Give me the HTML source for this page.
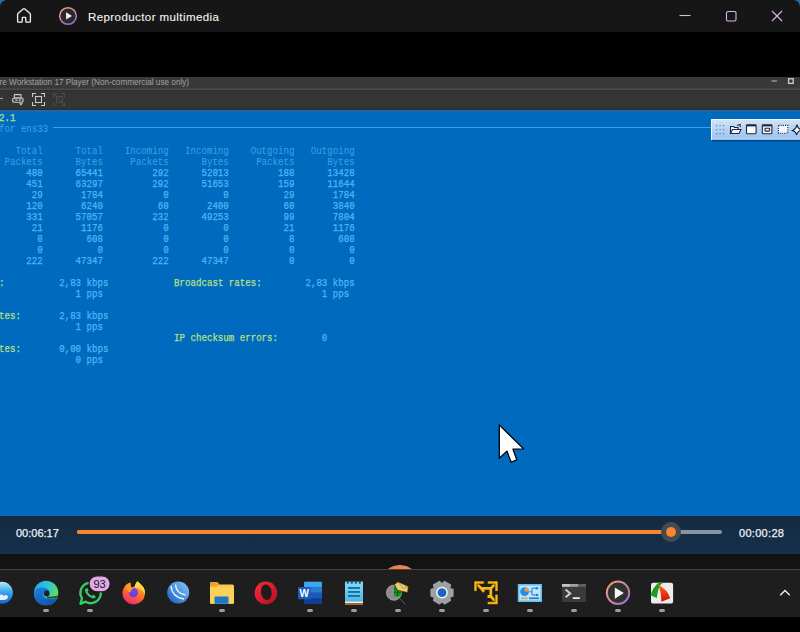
<!DOCTYPE html>
<html><head><meta charset="utf-8"><style>
*{margin:0;padding:0;box-sizing:border-box}
html,body{width:800px;height:632px;overflow:hidden;background:#000;font-family:"Liberation Sans",sans-serif}
.abs{position:absolute}
svg{position:absolute;overflow:visible}
#title{left:0;top:0;width:800px;height:32px;background:#161616}
#title .t{left:88px;top:10px;font-size:11.5px;line-height:14px;letter-spacing:0.42px;color:#f2f2f2;white-space:nowrap;-webkit-text-stroke:0.12px #f2f2f2}
#vmt{left:0;top:77px;width:800px;height:11px;background:#393939}
#vmt .t{left:-0.5px;top:0px;font-size:8.2px;color:#a2a2a2;white-space:nowrap;line-height:11px}
#sep{left:0;top:88px;width:800px;height:2px;background:linear-gradient(#414141 0 1px,#4c4c4c 1px)}
#sep2{left:0;top:90px;width:800px;height:1px;background:#2f2f2f}
#tb{left:0;top:91px;width:800px;height:19px;background:linear-gradient(#343434 0,#343434 17px,#3a3530 17px,#2b3033 18px)}
#con{left:0;top:110px;width:800px;height:406px;background:linear-gradient(#2d6699 0,#2d6699 1px,#1268b5 1px,#1268b5 2px,#006abf 2px);overflow:hidden}
#txt{left:-1.17px;top:2.7px;width:1000px;transform-origin:0 0;transform:scaleX(0.8683)}
.ln{position:absolute;left:0;white-space:pre;font-family:"Liberation Mono",monospace;font-size:10.5px;line-height:11px;-webkit-text-stroke:0.25px currentColor}
.y{color:#b9e07c}
.h{color:#3d9fe6;-webkit-text-stroke:0.05px currentColor}
.v{color:#4cb8f8}
#hline{left:53px;top:17px;width:747px;height:1px;background:#3a9fe8}
#ctl{left:0;top:516px;width:800px;height:38px;background:linear-gradient(#142a42,#16314c)}
#ctl .t{font-size:11px;line-height:14px;letter-spacing:0.15px;color:#eef2f6;white-space:nowrap;-webkit-text-stroke:0.25px #eef2f6}
#gap{left:0;top:554px;width:800px;height:15px;background:#131313}
#task{left:0;top:569px;width:800px;height:48px;background:#1e1e1e;border-top:1px solid #434343}
.dot{position:absolute;top:609px;width:6px;height:3px;border-radius:2px;background:#9c9c9c}
</style></head><body>
<div id="title" class="abs">
  <svg style="left:0;top:0" width="800" height="32">
    <path d="M0,8 A8,8 0 0 1 6,0 L0,0 Z" fill="#1f6f9a"/>
    <path d="M800,8 A8,8 0 0 0 794,0 L800,0 Z" fill="#1f6f9a"/>
    <path d="M17.6,14.6 Q17.6,13.8 18.2,13.3 L23.2,9 Q24,8.4 24.8,9 L29.8,13.3 Q30.4,13.8 30.4,14.6 V21.4 Q30.4,22.2 29.6,22.2 H26.4 Q25.8,22.2 25.8,21.6 V18.2 Q25.8,17.4 25,17.4 H23 Q22.2,17.4 22.2,18.2 V21.6 Q22.2,22.2 21.6,22.2 H18.4 Q17.6,22.2 17.6,21.4 Z" fill="none" stroke="#f4f4f4" stroke-width="1.3" stroke-linejoin="round"/>
    <defs><linearGradient id="mg" x1="0.2" y1="0" x2="0.6" y2="1"><stop offset="0" stop-color="#eaa078"/><stop offset="0.5" stop-color="#c884a8"/><stop offset="1" stop-color="#9070d0"/></linearGradient></defs>
    <circle cx="68" cy="16" r="8.3" fill="#29292b" stroke="url(#mg)" stroke-width="1.6"/>
    <path d="M66.1,12.3 L72,15.9 L66.1,19.6 Z" fill="#f4f4f4"/>
    <path d="M679.5,15.5 H690.5" stroke="#dcb8e6" stroke-width="1.1"/>
    <rect x="726.5" y="11.5" width="9.5" height="9.5" rx="1.5" fill="none" stroke="#dcb8e6" stroke-width="1.1"/>
    <path d="M772,11 L782,21 M782,11 L772,21" stroke="#dcb8e6" stroke-width="1.1"/>
  </svg>
  <div class="abs t">Reproductor multimedia</div>
</div>

<div id="vmt" class="abs"><div class="abs t">re Workstation 17 Player (Non-commercial use only)</div>
  <svg style="left:0;top:-1px" width="800" height="12">
    <path d="M771.5,5 H777" stroke="#bdbdbd" stroke-width="1"/>
    <rect x="788.6" y="2.8" width="4.6" height="4.6" fill="none" stroke="#d0d0d0" stroke-width="1.3"/>
  </svg>
</div>
<div id="sep" class="abs"></div><div id="sep2" class="abs"></div>
<div id="tb" class="abs">
  <svg style="left:0;top:-91px" width="800" height="120">
    <path d="M0,98.5 L3,98.5" stroke="#9a9a9a" stroke-width="1.2"/>
    <g fill="none" stroke="#c9c9c9" stroke-width="1.1">
      <rect x="14.3" y="94.6" width="6.8" height="3.4" rx="0.6"/>
      <rect x="12.6" y="98" width="10.6" height="4.3" rx="2.1"/>
    </g>
    <path d="M15.2,100.2 H17.6 M18.8,100.2 H21.2" stroke="#c9c9c9" stroke-width="1.3"/>
    <path d="M18.9,103.2 L23.1,103.2 L21,105.6 Z" fill="#c9c9c9"/>
    <g fill="none" stroke="#c9c9c9" stroke-width="1.1">
      <path d="M32.5,97 V93.5 H36 M41,93.5 H44.5 V97 M44.5,102 V105.5 H41 M36,105.5 H32.5 V102"/>
      <rect x="35.5" y="96.5" width="6" height="6"/>
    </g>
    <g fill="none" stroke="#4c4c4c" stroke-width="1.1">
      <path d="M53.5,97 V93.5 H57 M61,93.5 H64.5 V97 M64.5,102 V105.5 H61 M57,105.5 H53.5 V102"/>
      <rect x="56.5" y="96.5" width="6" height="6"/>
      <path d="M54,94 L64,105"/>
    </g>
  </svg>
</div>

<div id="con" class="abs">
  <div id="hline" class="abs"></div>
  <div id="txt" class="abs">
<div class="ln" style="top:0px"><span class="y">2.1</span></div>
<div class="ln" style="top:11px"><span class="h">for ens33</span></div>
<div class="ln" style="top:33px"><span class="h">   Total      Total    Incoming   Incoming    Outgoing   Outgoing</span></div>
<div class="ln" style="top:44px"><span class="h"> Packets      Bytes     Packets      Bytes     Packets      Bytes</span></div>
<div class="ln" style="top:55px"><span class="v">     480      65441         292      52013         188      13428</span></div>
<div class="ln" style="top:66px"><span class="v">     451      63297         292      51653         159      11644</span></div>
<div class="ln" style="top:77px"><span class="v">      29       1784           0          0          29       1784</span></div>
<div class="ln" style="top:88px"><span class="v">     120       6240          60       2400          60       3840</span></div>
<div class="ln" style="top:99px"><span class="v">     331      57057         232      49253          99       7804</span></div>
<div class="ln" style="top:110px"><span class="v">      21       1176           0          0          21       1176</span></div>
<div class="ln" style="top:121px"><span class="v">       8        608           0          0           8        608</span></div>
<div class="ln" style="top:132px"><span class="v">       0          0           0          0           0          0</span></div>
<div class="ln" style="top:143px"><span class="v">     222      47347         222      47347           0          0</span></div>
<div class="ln" style="top:165px"><span class="y">:</span>          <span class="v">2,83 kbps</span>            <span class="y">Broadcast rates:</span>        <span class="v">2,83 kbps</span></div>
<div class="ln" style="top:176px">              <span class="v">1 pps</span>                                        <span class="v">1 pps</span></div>
<div class="ln" style="top:198px"><span class="y">tes:</span>       <span class="v">2,83 kbps</span></div>
<div class="ln" style="top:209px">              <span class="v">1 pps</span></div>
<div class="ln" style="top:220px">                                <span class="y">IP checksum errors:</span>        <span class="v">0</span></div>
<div class="ln" style="top:231px"><span class="y">tes:</span>       <span class="v">0,00 kbps</span></div>
<div class="ln" style="top:242px">              <span class="v">0 pps</span></div>
  </div>
  <svg style="left:0;top:-110px" width="800" height="632">
    <defs><linearGradient id="ftg" x1="0" y1="0" x2="0" y2="1"><stop offset="0" stop-color="#d3e5f8"/><stop offset="1" stop-color="#98c0ee"/></linearGradient></defs>
    <rect x="712" y="140" width="88" height="1.6" fill="#083e78" opacity="0.8"/>
    <rect x="711" y="119" width="89" height="21" fill="url(#ftg)"/>
    <path d="M711.5,140 V119.5 H800" fill="none" stroke="#f2f8fe" stroke-width="1"/>
    <rect x="712" y="137.5" width="88" height="1" fill="#b8d6f6"/>
    <g fill="#5f7fa8">
      <rect x="716" y="125" width="1.2" height="1.2"/><rect x="719.5" y="125" width="1.2" height="1.2"/><rect x="723" y="125" width="1.2" height="1.2"/>
      <rect x="716" y="129" width="1.2" height="1.2"/><rect x="719.5" y="129" width="1.2" height="1.2"/><rect x="723" y="129" width="1.2" height="1.2"/>
      <rect x="716" y="133" width="1.2" height="1.2"/><rect x="719.5" y="133" width="1.2" height="1.2"/><rect x="723" y="133" width="1.2" height="1.2"/>
    </g>
    <g fill="none" stroke="#1b2a40" stroke-width="1.1">
      <path d="M730.5,133.5 V126.5 H733.5 L734.5,127.5 H738 V129.5 M730.5,133.5 L732.5,129.5 H741 L739,133.5 Z" fill="#f8f8f8"/>
      <path d="M737,125.5 L740,124.5 L740.5,127" />
      <rect x="746.5" y="124.8" width="9.6" height="9" rx="0.8" fill="#fafafa"/>
      <path d="M746.5,125.6 H756.1" stroke-width="1.6"/>
      <rect x="762.3" y="124.8" width="9.6" height="9" rx="0.8" fill="#f2f2f2"/>
      <path d="M762.3,125.6 H771.9" stroke-width="1.6"/>
      <rect x="765" y="128.3" width="4.6" height="2.8" rx="0.6"/>
      <rect x="778.4" y="125.4" width="9.4" height="7.8" stroke-dasharray="1.1 1.1" fill="#f6f8fa"/>
      <path d="M797,124.6 Q797.6,128.8 801.5,129.6 Q797.8,130.8 796.4,134.8 Q795.8,131.2 792.6,130.6 Q796,129 797,124.6 Z" fill="#f8f8f8"/>
    </g>
    <path d="M499.3,424.9 L499.3,458.3 L506.9,451.1 L511.1,462.1 L516.8,459.9 L513,449.2 L523.6,448.9 Z" fill="#fff" stroke="#000" stroke-width="1.3" stroke-linejoin="round"/>
  </svg>
</div>

<div id="ctl" class="abs">
  <div class="abs t" style="left:16px;top:10px;letter-spacing:0">00:06:17</div>
  <div class="abs t" style="left:739px;top:10px;letter-spacing:0.3px">00:00:28</div>
  <div class="abs" style="left:77px;top:14px;width:645px;height:4px;border-radius:2px;background:#8b949c"></div>
  <div class="abs" style="left:77px;top:14px;width:594px;height:4px;border-radius:2px;background:#f7862f"></div>
  <div class="abs" style="left:661px;top:6px;width:20px;height:20px;border-radius:50%;background:#454a50"></div>
  <div class="abs" style="left:666px;top:11px;width:10px;height:10px;border-radius:50%;background:#f7862f"></div>
</div>
<div id="gap" class="abs"></div>
<div id="task" class="abs"></div>
<svg style="left:0;top:0" width="800" height="632">
  <defs>
    <clipPath id="abv"><rect x="0" y="554" width="800" height="15"/></clipPath>
    <linearGradient id="orng" x1="0" y1="0" x2="1" y2="0"><stop offset="0" stop-color="#e9772e"/><stop offset="0.7" stop-color="#ef8a52"/><stop offset="1" stop-color="#d9728a"/></linearGradient>
    <linearGradient id="msg" x1="0" y1="0" x2="0" y2="1"><stop offset="0" stop-color="#b5ecfb"/><stop offset="0.45" stop-color="#3aa8ee"/><stop offset="1" stop-color="#1464d8"/></linearGradient>
    <linearGradient id="edg" x1="0" y1="0.2" x2="1" y2="0.6"><stop offset="0" stop-color="#2aa8e8"/><stop offset="0.5" stop-color="#2fc6d6"/><stop offset="1" stop-color="#66e04e"/></linearGradient><linearGradient id="edw" x1="0" y1="0" x2="0.6" y2="1"><stop offset="0" stop-color="#1c86e0"/><stop offset="1" stop-color="#0f56b0"/></linearGradient>
    <linearGradient id="ffx" x1="0.8" y1="0" x2="0.3" y2="1"><stop offset="0" stop-color="#ffc83a"/><stop offset="0.45" stop-color="#ff7a22"/><stop offset="1" stop-color="#f0266a"/></linearGradient>
    <linearGradient id="wbx" x1="1" y1="0" x2="0" y2="1"><stop offset="0" stop-color="#8fc8f6"/><stop offset="0.5" stop-color="#4a92e0"/><stop offset="1" stop-color="#1c5cb8"/></linearGradient>
    <linearGradient id="opr" x1="0" y1="0" x2="1" y2="1"><stop offset="0" stop-color="#ff2a3a"/><stop offset="1" stop-color="#b0101e"/></linearGradient>
    <linearGradient id="mpr" x1="0" y1="0" x2="1" y2="1"><stop offset="0" stop-color="#f4a468"/><stop offset="1" stop-color="#9a6ad8"/></linearGradient>
  </defs>
  <circle cx="399.85" cy="584.6" r="19.7" fill="url(#orng)" clip-path="url(#abv)"/>
  <!-- 1 partial blue -->
  <circle cx="1.9" cy="592.8" r="11" fill="url(#msg)"/>
  <path d="M-2,596 Q2,593 4,596 Q6,594 8,596.5 Q8,600 3,600 L-2,600 Z" fill="#e8eef4"/>
  <!-- Edge -->
  <circle cx="46.1" cy="593" r="12.2" fill="url(#edg)"/>
  <path d="M33.9,592.5 Q34.5,587.6 41,587.4 Q48,587.3 50,592.3 Q46,589.5 43.6,592.6 Q42.2,597.2 46.5,598.6 Q52.5,599.6 57.8,597.2 Q55.5,605.2 46,605.2 Q34.2,605 33.9,592.5 Z" fill="url(#edw)"/>
  <circle cx="46.7" cy="593.5" r="2.9" fill="#1b2226"/>
  <path d="M47,596.4 Q52.5,597.2 58.2,595.6 L58,597.1 Q52.5,599.1 46.8,598.2 Z" fill="#14303a" opacity="0.85"/>
  <!-- WhatsApp -->
  <path d="M80.5,603.8 L82,598.3 A10.2,10.2 0 1 1 85.5,601.7 Z" fill="none" stroke="#35cc68" stroke-width="2.4" stroke-linejoin="round"/>
  <path d="M85.5,588.5 Q84.5,590 85.5,592.5 Q87.5,596.5 91.5,598 Q94,599 95.5,597.5 L95.5,596 L93.2,594.8 L92,596 Q89,594.8 87.5,591.8 L88.6,590.6 L87.6,588.2 Z" fill="#35cc68"/>
  <rect x="89" y="575.8" width="21.2" height="16" rx="8" fill="#e0aaea" stroke="#1d1d1d" stroke-width="1.2"/>
  <text x="99.5" y="588.3" font-family="Liberation Sans" font-size="11" fill="#151515" text-anchor="middle">93</text>
  <!-- Firefox -->
  <circle cx="133.7" cy="593.2" r="11.2" fill="url(#ffx)"/>
  <path d="M130.2,580.5 L136.8,580.5 L134.6,586.8 L131.2,587.2 Z" fill="#1d1d1d"/>
  <path d="M134.2,587.2 Q135.6,583.6 137.3,580.9 Q140.5,583.2 142.6,586.2 Q145.4,589.5 145,594.5 Q143,588.3 134.2,587.2 Z" fill="#ffd845"/>
  <path d="M125.2,586.2 L126.8,584.6 L128,586.6 L129.6,584.8 L130.8,587.3 Z" fill="#ffa236"/>
  <circle cx="133.4" cy="592.8" r="4.7" fill="#7440e0"/>
  <path d="M125.5,587.5 Q129.8,586.2 133.2,588.6 Q131,589.8 129.7,592.8 Q127.3,591 125.5,587.5 Z" fill="#ff9a2a"/>
  <!-- WinBox -->
  <circle cx="178.2" cy="592.5" r="11" fill="url(#wbx)"/>
  <path d="M171,586 Q172,597 184,599" fill="none" stroke="#f4f8fc" stroke-width="1.3"/>
  <path d="M175.5,584.5 Q176,593.5 185.5,595" fill="none" stroke="#f4f8fc" stroke-width="1.3"/>
  <!-- Explorer -->
  <path d="M210,583.5 Q210,582 211.5,582 H217 L219.5,584.5 H232.5 Q234,584.5 234,586 V602.5 Q234,603.7 232.7,603.7 H211.3 Q210,603.7 210,602.5 Z" fill="#f9c74a"/>
  <path d="M210,583.5 Q210,582 211.5,582 H217 L219.5,584.5 L217,586.5 H210 Z" fill="#e6a526"/>
  <path d="M210,587.5 H234 V602.5 Q234,603.7 232.7,603.7 H211.3 Q210,603.7 210,602.5 Z" fill="#fbd15a"/>
  <path d="M214.5,597.5 Q214.5,596.4 215.6,596.4 H227.4 Q228.5,596.4 228.5,597.5 V603.7 H214.5 Z" fill="#1b78c8"/>
  <!-- Opera -->
  <ellipse cx="265.9" cy="592.9" rx="11.3" ry="11.3" fill="url(#opr)"/>
  <ellipse cx="266.3" cy="592.3" rx="5.3" ry="7.8" fill="#1d1d1d" transform="rotate(-8 266.3 592.3)"/>
  <!-- Word -->
  <rect x="304" y="581.8" width="18" height="21.9" rx="1.2" fill="#185abd"/>
  <rect x="304" y="581.8" width="18" height="5.4" rx="1.2" fill="#41a5ee"/>
  <rect x="304" y="587.2" width="18" height="5.5" fill="#2b7cd3"/>
  <rect x="304" y="592.7" width="18" height="5.5" fill="#185abd"/>
  <rect x="304" y="598.2" width="18" height="5.5" rx="1.2" fill="#103f91"/>
  <rect x="298" y="586.9" width="12.7" height="12.3" rx="1" fill="#1a5cc0"/>
  <text x="304.3" y="597" font-family="Liberation Sans" font-weight="bold" font-size="10" fill="#fff" text-anchor="middle">W</text>
  <!-- Notepad -->
  <defs><linearGradient id="npd" x1="0" y1="0" x2="0" y2="1"><stop offset="0" stop-color="#8adcf8"/><stop offset="1" stop-color="#4cb6e6"/></linearGradient></defs>
  <rect x="345" y="581.6" width="18" height="20.4" fill="url(#npd)"/>
  <rect x="345" y="601.6" width="18" height="1.6" fill="#f6f2e6"/>
  <rect x="345" y="603.2" width="18" height="1.8" fill="#a8682e"/>
  <g fill="#0f4a6a"><rect x="346.8" y="581.6" width="2" height="2"/><rect x="350.8" y="581.6" width="2" height="2"/><rect x="354.8" y="581.6" width="2" height="2"/><rect x="358.8" y="581.6" width="2" height="2"/></g>
  <g fill="#16719e"><rect x="348" y="587" width="12" height="1.9"/><rect x="348" y="591" width="12" height="1.9"/><rect x="348" y="595" width="12" height="1.9"/></g>
  <!-- magnifier -->
  <clipPath id="lens"><circle cx="394" cy="592.7" r="7.6"/></clipPath>
  <path d="M399.6,598.6 L405.6,605.2" stroke="#1a1a1a" stroke-width="2.2"/>
  <path d="M400,598.6 L405.4,604.6" stroke="#7a7a7a" stroke-width="0.8"/>
  <circle cx="394" cy="592.7" r="7.6" fill="#8c8c8c" stroke="#b8b8b8" stroke-width="0.7"/>
  <g clip-path="url(#lens)">
    <rect x="394" y="585.4" width="8" height="11" fill="#129a26"/>
    <path d="M394,588.8 H402 M394,592.3 H402 M397.6,585.4 V596.4" stroke="#064a0c" stroke-width="0.8"/>
  </g>
  <path d="M394.5,584.6 L398,581.8 L408.3,586.4 L407.6,592.6 L397.5,590.2 Z" fill="#f2cc72" stroke="#2a2210" stroke-width="0.6"/>
  <path d="M398,581.8 L403,588.4 L408.3,586.4" fill="none" stroke="#9a7a2a" stroke-width="0.7"/>
  <!-- Settings gear -->
  <path d="M450.27,588.67 L452.81,589.40 L452.81,596.00 L450.27,596.73 L449.63,597.84 L450.26,600.41 L444.54,603.71 L442.64,601.88 L441.36,601.88 L439.46,603.71 L433.74,600.41 L434.37,597.84 L433.73,596.73 L431.19,596.00 L431.19,589.40 L433.73,588.67 L434.37,587.56 L433.74,584.99 L439.46,581.69 L441.36,583.52 L442.64,583.52 L444.54,581.69 L450.26,584.99 L449.63,587.56 Z" fill="#9da1a7" stroke="#9da1a7" stroke-width="1.6" stroke-linejoin="round"/>
  <circle cx="442" cy="592.7" r="5.9" fill="#f2f4f6"/>
  <circle cx="442" cy="592.7" r="4.4" fill="#1a64c2"/>
  <!-- VMware -->
  <g fill="none" stroke-linejoin="miter">
    <path d="M476.5,583.5 L481.2,588.4 H490.8 L495.5,583.5 M490.8,588.4 V596.2 L495.8,602.2 M481.2,588.4 L484,591.8" stroke="#141414" stroke-width="3.6"/>
    <path d="M476.5,583.5 L481.2,588.4 H490.8 L495.5,583.5 M490.8,588.4 V596.2 L495.8,602.2 M481.2,588.4 L484,591.8 M487.5,596.5 H490.8" stroke="#f6b816" stroke-width="2.8"/>
  </g>
  <g fill="#f6b816" stroke="#141414" stroke-width="0.6">
    <path d="M474,581 H484.2 V584 H477 V591.3 H474 Z"/>
    <path d="M487.4,581 H498 V591.3 H495 V584 H487.4 Z"/>
    <path d="M498,594.2 V604.6 H487.4 V601.6 H495 V594.2 Z"/>
  </g>
  <!-- control panel -->
  <rect x="517.8" y="584" width="24.2" height="18" fill="#5fc0f4"/>
  <rect x="519.4" y="585.6" width="21" height="14.8" fill="#bfe6fb"/>
  <circle cx="524.6" cy="591.6" r="4.4" fill="#2a8ce0"/>
  <path d="M524.6,591.6 V587.2 A4.4,4.4 0 0 1 529,591.6 Z" fill="#f0a030"/>
  <path d="M529.5,591.8 H532 V588.2 H536.5 M532,591.8 V595 H536.5" fill="none" stroke="#2a7ad0" stroke-width="1"/>
  <circle cx="537" cy="588.2" r="1.3" fill="#2a7ad0"/><circle cx="537" cy="595" r="1.3" fill="#2a7ad0"/>
  <rect x="521" y="597.4" width="6.5" height="1.8" fill="#d8a85a"/>
  <rect x="529" y="597.4" width="10" height="1.8" fill="#2a7ad0"/>
  <!-- terminal -->
  <rect x="562" y="584" width="24" height="18" rx="1" fill="#3b3b3b"/>
  <rect x="562" y="584" width="8" height="2.8" fill="#c4c4c4"/>
  <rect x="570" y="584" width="8" height="2.8" fill="#a2a2a2"/>
  <rect x="578" y="584" width="8" height="2.8" fill="#616161"/>
  <path d="M565.6,589.6 L570.2,593.4 L565.6,597.2" fill="none" stroke="#cfcfcf" stroke-width="2"/>
  <rect x="572.8" y="597.2" width="7" height="1.8" fill="#ececec"/>
  <!-- media player -->
  <circle cx="618" cy="592.8" r="11.2" fill="#303030" stroke="url(#mpr)" stroke-width="2"/>
  <path d="M614.8,587.4 L623.8,593 L614.8,598.7 Z" fill="#f6f6f6"/>
  <!-- faststone -->
  <defs><linearGradient id="fsr" x1="0" y1="0" x2="0" y2="1"><stop offset="0" stop-color="#ff6a14"/><stop offset="1" stop-color="#d40c0c"/></linearGradient></defs>
  <rect x="651" y="582.8" width="22.1" height="20.8" rx="2.2" fill="#ececec"/>
  <path d="M657,584 L661.5,581.6 L662.6,583.2 L659.8,585.6 Q658,590 656.8,598 L650.3,595.2 Q652.8,588.2 657,584 Z" fill="#1a9e22"/>
  <path d="M658,584.5 Q668,590 670.2,598.2 L661.3,601.7 Q661.2,591 658,584.5 Z" fill="url(#fsr)"/>
  <!-- chevron -->
  <path d="M780.2,595.3 L785,590.5 L789.8,595.3" fill="none" stroke="#f2f2f2" stroke-width="1.3"/>
  <!-- dots -->
</svg>
<div class="dot" style="left:43px"></div>
<div class="dot" style="left:87px"></div>
<div class="dot" style="left:219px"></div>
<div class="dot" style="left:307px"></div>
<div class="dot" style="left:351px"></div>
<div class="dot" style="left:395px"></div>
<div class="dot" style="left:439px"></div>
<div class="dot" style="left:483px"></div>
<div class="dot" style="left:527px"></div>
<div class="dot" style="left:571px"></div>
<div class="dot" style="left:615px"></div>
<div class="dot" style="left:659px"></div>
</body></html>
